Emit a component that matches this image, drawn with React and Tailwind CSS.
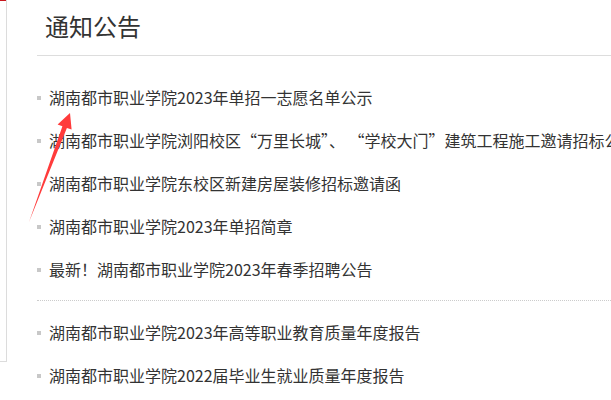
import React from "react";

const groupA = [
  "湖南都市职业学院2023年单招一志愿名单公示",
  "湖南都市职业学院浏阳校区“万里长城”、 “学校大门”建筑工程施工邀请招标公告",
  "湖南都市职业学院东校区新建房屋装修招标邀请函",
  "湖南都市职业学院2023年单招简章",
  "最新！湖南都市职业学院2023年春季招聘公告",
];

const groupB = [
  "湖南都市职业学院2023年高等职业教育质量年度报告",
  "湖南都市职业学院2022届毕业生就业质量年度报告",
];

function Row({ text }) {
  return (
    <li className="h-[43px] flex items-center whitespace-nowrap">
      <span className="w-[4px] h-[4px] bg-[#c8c8c8] mr-[8px] shrink-0"></span>
      <a className="text-[16px] leading-[43px] text-[#333] whitespace-pre">{text}</a>
    </li>
  );
}

export default function App() {
  return (
    <div
      className="relative w-[611px] h-[400px] overflow-hidden bg-white flex"
      style={{ fontFamily: '"Noto Sans CJK SC", "Liberation Sans", sans-serif' }}
    >
      {/* left panel edge */}
      <div className="w-[7px] h-[362px] shrink-0 border-r border-b border-[#dcdcdc]">
        <div className="h-px w-[6px] bg-[#c8161d]"></div>
      </div>

      {/* notice column */}
      <div className="ml-[30px] flex-1 min-w-0">
        <div className="pt-[6px] pb-[9px] pl-[8px] border-b border-[#dddddd]">
          <h2 className="text-[24px] leading-[40px] text-[#333]">通知公告</h2>
        </div>

        <ul className="pt-[20px]">
          {groupA.map((t, i) => (
            <Row key={i} text={t} />
          ))}
        </ul>

        <div className="mt-[9px] border-t border-dotted border-[#cccccc]"></div>

        <ul className="pt-[10px]">
          {groupB.map((t, i) => (
            <Row key={i} text={t} />
          ))}
        </ul>
      </div>

      {/* annotation arrow */}
      <svg
        className="absolute left-0 top-0 pointer-events-none"
        width="611"
        height="400"
        viewBox="0 0 611 400"
      >
        <polygon
          points="29,222 62.4,126.3 57.6,124.6 70,113 71.6,129.6 66.9,128"
          fill="#ff3b3b"
        />
      </svg>
    </div>
  );
}
